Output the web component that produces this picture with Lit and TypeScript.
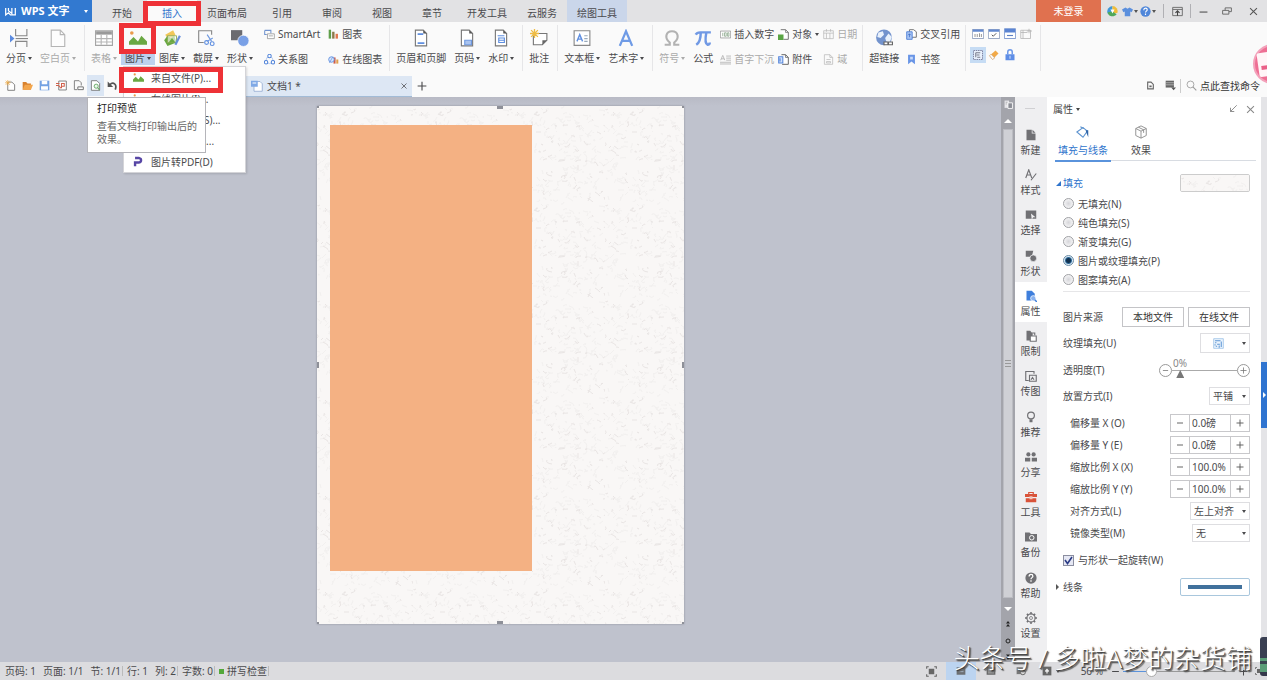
import { LitElement, html, svg, css, nothing } from "lit";
import { customElement, state } from "lit/decorators.js";
import { classMap } from "lit/directives/class-map.js";

const doc = svg`<path d="M3 1h7l3 3v11H3z" fill="#fff" stroke="#777"/><path d="M10 1v3h3z" fill="#555"/>`;
const ICONS: Record<string, unknown> = {
  logo: svg`<path d="M1 3v10l4-3 3 3h7V3M5 3v4l5 4V3" fill="none" stroke="#fff" stroke-width="1.8"/>`,
  pagebreak: svg`<path d="M5 0v6h10V0M5 16v-5h10v5" fill="none" stroke="#888"/><path d="M5 8.500h11" stroke="#888"/><path d="M0 5l4 3.500L0 12z" fill="#5b8be0"/>`,
  blank: svg`<path d="M2 1h8l4 4v10.500H2z" fill="#fdfdfd" stroke="#b5b5b5"/><path d="M10 1v4h4" fill="none" stroke="#b5b5b5"/>`,
  table: svg`<path d="M.5 1.500h15v13H.5z" fill="#fff" stroke="#a5a5a5"/><path d="M1 2h14v3H1z" fill="#999"/><path d="M1 8.500h14M1 11.500h14M5.500 5v9M10.500 5v9" stroke="#b5b5b5"/>`,
  picture: svg`<path d="M0 14v-3l4-4 4 4 3-5 5 5v3z" fill="#6aa843"/><circle cx="2.500" cy="3.500" r="1.600" fill="#eb9a4b"/>`,
  gallery: svg`<path d="M2 5l7-4 2 4-6 5z" fill="#f1c75a"/><path d="M1 10l3-4 3 2 3-2 2 6-8 3z" fill="#6aa843"/><path d="M4 6h8v6H4z" fill="#fff" fill-opacity=".6" stroke="#8eac55" stroke-width=".8"/><path d="M5 12l3-4 3 4z" fill="#6aa843"/><path d="M11 14l4-8" stroke="#6990db" stroke-width="2"/>`,
  capture: svg`<path d="M13 5V1.500H1.500V12H6" fill="none" stroke="#888"/><path d="M9 5l4 6M14 8l-5 3" stroke="#6e98df"/><circle cx="8.500" cy="12" r="1.700" fill="none" stroke="#5f8fe0"/><circle cx="13.500" cy="13" r="1.700" fill="none" stroke="#5f8fe0"/>`,
  shapes: svg`<path d="M0 1h10v9H0z" fill="#6b6b70"/><circle cx="11" cy="10.500" r="5" fill="#79a0e6" stroke="#fff" stroke-width=".6"/>`,
  smart: svg`<path d="M1 2h9v4M1 2v6h3" fill="none" stroke="#7294cf" stroke-width="1.500"/><path d="M5 7h10v7H5z" fill="#fff" stroke="#888"/><path d="M7 10h6" stroke="#888"/>`,
  relation: svg`<circle cx="8" cy="9" r="5" fill="none" stroke="#9bb7e6"/><circle cx="8" cy="3" r="2.500" fill="#fff" stroke="#4f82d8" stroke-width="1.500"/><circle cx="3" cy="12" r="2.500" fill="#fff" stroke="#4f82d8" stroke-width="1.500"/><circle cx="13" cy="12" r="2.500" fill="#fff" stroke="#4f82d8" stroke-width="1.500"/>`,
  chart: svg`<path d="M1 1h3.500v13H1z" fill="#5f9f4b"/><path d="M6 4h3.500v10H6z" fill="#8a7a4b"/><path d="M11 7h3.500v7H11z" fill="#e0764d"/>`,
  ochart: svg`<path d="M8 5h3v9H8z" fill="#ce5c46"/><path d="M12 8h3v6h-3z" fill="#e0a04d"/><circle cx="5" cy="8" r="4" fill="#d8e6fb" stroke="#5f8fe0" stroke-width="1.300"/><path d="M2 13l5-9" stroke="#5f8fe0"/>`,
  header: svg`${doc}<path d="M5 4.500h5M5 12.500h6" stroke="#5f8fe0" stroke-width="1.500"/>`,
  pageno: svg`${doc}<path d="M6 10h6v4H6z" fill="#a9c3ef" stroke="#6e98df"/>`,
  watermark: svg`${doc}<path d="M5 6h6M6 8h5v4H6zM6 10h5" fill="none" stroke="#5f8fe0"/>`,
  comment: svg`<path d="M3 4h12v6l-4 4H3z" fill="#fff" stroke="#777"/><path d="M11 14v-4h4z" fill="#666"/><path d="M4 0v8M0 4h8M1 1l6 6M7 1L1 7" stroke="#eebc45" stroke-width="1.200"/>`,
  textbox: svg`<path d="M1 1.500h14v13H1z" fill="#fff" stroke="#888"/><path d="M3.500 11L6 5l2.500 6M4.500 9h3" fill="none" stroke="#5f8fe0" stroke-width="1.200"/><path d="M10 6h3M10 8.500h3M10 11h3" stroke="#9ab"/>`,
  wordart: svg`<path d="M2.500 15L8 2l5.500 13M4.500 10.500h7" fill="none" stroke="#6f9be6" stroke-width="2"/>`,
  omega: svg`<path d="M1.500 14h4.500v-2C1 8 2.500 2 8 2s7 6 2 10v2h4.500" fill="none" stroke="#b2b2b2" stroke-width="1.900"/>`,
  pi: svg`<path d="M1.500 5c1-2 2-2 4-2H15M6 3c0 5-1 9-4 11M11 3c-1 5-1 10 1 11 1 0 2 0 2-2" fill="none" stroke="#7199e4" stroke-width="2.200"/>`,
  number: svg`<path d="M.5 3h15v10H.5z" fill="#fff" stroke="#888"/><path d="M4 5.500v5M6.500 5.500h2.500v5H6.500zM11 5.500h2v5h-2z" fill="none" stroke="#7a9a7a"/>`,
  dropcap: svg`<path d="M1 9l3-7 3 7M2 7h4M9 3h7M9 6h7M9 9h7M0 12h16M0 14.500h16" fill="none" stroke="#b5b5b5" stroke-width="1.300"/>`,
  object: svg`<path d="M4 1h7l4 4v10H8" fill="#fff" stroke="#666" stroke-width="1.300"/><path d="M11 1v4h4" fill="none" stroke="#666"/><path d="M0 8h8v8H0z" fill="#5aa545"/>`,
  attach: svg`<path d="M5 1h6l4 4v10H6" fill="#fff" stroke="#555" stroke-width="1.300"/><path d="M11 1v4h4" fill="none" stroke="#555"/><path d="M1 4h6v9H1zM3 6v5" fill="#cfe0fa" stroke="#5585da" stroke-width="1.500"/>`,
  date: svg`<path d="M1 2.500h14V14H1zM1 6h14M5 0v4M11 0v4M5 6v8M10 6v8" fill="none" stroke="#b5b5b5"/>`,
  field: svg`<path d="M2 1h8l4 4v10H2zM10 1v4h4M5 8h6M5 11h6v2H5z" fill="none" stroke="#b5b5b5"/>`,
  globe: svg`<circle cx="8" cy="7.500" r="7" fill="#7393cd"/><path d="M3 3l4-1 1 3-3 3-3-1zM9 8l3-4 3 3-2 5-3-1z" fill="#e9f1fb"/><path d="M8 11.500h3.500v2.500H8zM12 11.500h3.500v2.500H12z" fill="#fff" stroke="#666"/>`,
  xref: svg`<path d="M5 1h6l4 3v8H5z" fill="#fff" stroke="#666" stroke-width="1.300"/><path d="M1 4h8v11H1z" fill="#a8c4f3" stroke="#4f80d6" stroke-width="1.300"/><path d="M5 12V7M3 9l2-2 2 2" fill="none" stroke="#2d62c0"/>`,
  bookmark: svg`<path d="M3 1h10v14l-5-4-5 4z" fill="#6995e6"/><path d="M6 4h4v4H6z" fill="#c7d9f8"/>`,
  ftext: svg`<path d="M.5 2h15v12H.5z" fill="#fff" stroke="#7c8fb3"/><path d="M1 2h14v3H1z" fill="#6288cf"/><path d="M4 8v4M7 8v4M10 7v5M12.500 8v4" stroke="#777"/>`,
  fcheck: svg`<path d="M.5 2h15v12H.5z" fill="#fff" stroke="#7c8fb3"/><path d="M1 2h14v3H1z" fill="#6288cf"/><path d="M5 9l2 2 4-4" fill="none" stroke="#555" stroke-width="1.300"/>`,
  fdrop: svg`<path d="M.5 1h15v13H.5z" fill="#fff" stroke="#5f82c5"/><path d="M1 1h14v5H1z" fill="#5b84d2"/><path d="M4 10h8" stroke="#5f82c5" stroke-width="1.500"/>`,
  fgrey: svg`<path d="M1 3h13v11H1z" fill="none" stroke="#b0b0b0"/><path d="M1 6h9M4 3v11M12 1v6M9 4h7" stroke="#b0b0b0"/>`,
  fshade: svg`<path d="M2 2h12v12H2z" fill="#e8f0fc" stroke="#668" stroke-dasharray="2 1"/><path d="M5 11V5h6M6 8h4M7 11h4" fill="none" stroke="#556"/>`,
  eraser: svg`<path d="M2 9l8-7 4 4-8 8z" fill="#f1a948"/><path d="M2 9l2-2 5 5-3 2z" fill="#fff" stroke="#c9a47c"/>`,
  lock: svg`<path d="M5 7V4a3 3 0 016 0v3" fill="none" stroke="#6c98e8" stroke-width="2"/><path d="M2 7h12v8H2z" fill="#5d8de6"/><path d="M8 9v4" stroke="#fff"/>`,
  qnew: svg`<path d="M4 3h6l4 4v8H4z" fill="#fff" stroke="#777" stroke-width="1.300"/><path d="M4 0v8M0 4h8M1 1l6 6M7 1L1 7" stroke="#eeaa45"/>`,
  qopen: svg`<path d="M1 3h5l2 2h5v9H1z" fill="#d9822f"/><path d="M4 7h12l-3 7H1z" fill="#f3a64d"/>`,
  qsave: svg`<path d="M1 1h14v14H1z" fill="#74a2e3"/><path d="M4 1h8v5H4zM3 9h10v5H3z" fill="#fff"/>`,
  qpdf: svg`<path d="M4 1.500h11v13H4z" fill="#fff" stroke="#777" stroke-width="1.300"/><path d="M8 12V5h4v4H8M0 5h5M0 8h4l3 4" fill="none" stroke="#d0604b" stroke-width="1.500"/>`,
  qprint: svg`<path d="M2 1h7l3 3v4M2 1v13h4" fill="none" stroke="#777" stroke-width="1.300"/><path d="M7 10h8v4H7z" fill="#fff" stroke="#666" stroke-width="1.300"/>`,
  qprev: svg`<path d="M2 1h8l4 4v10H2z" fill="#fff" stroke="#777" stroke-width="1.300"/><circle cx="9" cy="9" r="3" fill="#eaf6ea" stroke="#60a560" stroke-width="1.300"/><path d="M11 11l3 4" stroke="#60a560" stroke-width="1.500"/>`,
  undo: svg`<path d="M4 7c5-5 11-1 8 7" fill="none" stroke="#555" stroke-width="2.500"/><path d="M1 2v8h8z" fill="#555"/>`,
  docw: svg`<path d="M4 2h8l3 3v10H4z" fill="#fff" stroke="#8aa3cb"/><path d="M0 1h9v8H0z" fill="#7fa9e6"/><path d="M2 4h5M6 11h7" stroke="#fff" stroke-width="1.500"/>`,
  close: svg`<path d="M3 3l10 10M13 3L3 13" stroke="currentColor" stroke-width="1.500"/>`,
  plus: svg`<path d="M8 1v14M1 8h14" stroke="currentColor" stroke-width="1.800"/>`,
  minus: svg`<path d="M2 8h12" stroke="currentColor" stroke-width="1.800"/>`,
  minimise: svg`<path d="M1 9h14" stroke="#555" stroke-width="2"/>`,
  restore: svg`<path d="M5 7V3h10v6h-4M1 7h10v6H1z" fill="none" stroke="#666" stroke-width="1.500"/>`,
  shield: svg`<path d="M8 0a8 8 0 00-7 11l6 4z" fill="#3f97d8"/><path d="M8 0a7.500 7.500 0 017 10l-7 1z" fill="#f0bd39"/><path d="M1 9c0 5 8 9 13 3l-6-4z" fill="#4fa95a"/><path d="M5 5h6L8 11z" fill="#fff"/>`,
  shirt: svg`<path d="M5 2l3 2 3-2 5 3-2 4-2-1v7H4V8L2 9 0 5z" fill="#5b8fdd"/>`,
  help: svg`<circle cx="8" cy="8" r="7.500" fill="#4f86d9"/><path d="M5.500 6c0-4 5-3.500 5-.5 0 2-2.500 2-2.500 4M8 11v2" fill="none" stroke="#fff" stroke-width="1.700"/>`,
  helpg: svg`<circle cx="8" cy="8" r="7.500" fill="#707074"/><path d="M5.500 6c0-4 5-3.500 5-.5 0 2-2.500 2-2.500 4M8 11v2" fill="none" stroke="#fff" stroke-width="1.700"/>`,
  upbox: svg`<path d="M1 2h14v12H1zM1 5h14" fill="none" stroke="#666" stroke-width="1.300"/><path d="M8 14V8M5 10l3-3 3 3" fill="none" stroke="#444" stroke-width="1.600"/>`,
  search: svg`<circle cx="6.500" cy="6.500" r="5" fill="none" stroke="#999" stroke-width="1.200"/><path d="M10 10l5 5" stroke="#999" stroke-width="1.500"/>`,
  dmini: svg`<path d="M3 2h6l4 4v8H3z" fill="none" stroke="#666" stroke-width="2"/><path d="M6 8h4v3H6z" fill="#666"/>`,
  lmini: svg`<path d="M1 1h12v10H1z" fill="#666"/><path d="M1 4h12M1 7h12" stroke="#ccc"/><path d="M9 11h7l-3.500 4z" fill="#555"/>`,
  pdf: svg`<path d="M3 15V9.500h6M3 3h6a3.300 3.300 0 010 6.500" fill="none" stroke="#5746a5" stroke-width="3.500"/>`,
  snew: svg`<path d="M2 1h7v5h5v9H2z" fill="#707074"/><path d="M10 1l4 4h-4z" fill="#707074"/>`,
  sstyle: svg`<path d="M1 12L5 1l4 11M2.500 8h5M8 15l7-9" fill="none" stroke="#707074" stroke-width="1.500"/>`,
  sselect: svg`<path d="M1 2h14v11H1z" fill="#707074"/><path d="M8 6l6 5-3 0-2 3z" fill="#efeff1"/>`,
  sshape: svg`<path d="M1 1h10l-2 8H1z" fill="#707074"/><circle cx="11" cy="11" r="4.500" fill="#707074" stroke="#efeff1"/>`,
  sprop: svg`<path d="M2 1h7l4 4v9H2z" fill="#3f7fdc"/><circle cx="11" cy="11" r="3.500" fill="#8ab2ee" stroke="#fff"/><path d="M13 13l3 3" stroke="#3f7fdc" stroke-width="2"/>`,
  slimit: svg`<path d="M2 1h5l3 4v9H2z" fill="#707074"/><path d="M7 8h8v7H7z" fill="#fff" stroke="#707074" stroke-width="1.500"/><path d="M9 7V4h4v3" fill="none" stroke="#707074" stroke-width="1.500"/>`,
  simg: svg`<path d="M12 5V2H1v12h4" fill="none" stroke="#707074" stroke-width="1.500"/><path d="M6 7h9v8H6zM8 13l2-3 2 3" fill="none" stroke="#707074" stroke-width="1.500"/>`,
  srec: svg`<circle cx="8" cy="6" r="4.500" fill="none" stroke="#707074" stroke-width="1.600"/><path d="M6 11h4v4H6z" fill="#707074"/>`,
  sshare: svg`<circle cx="4.500" cy="4.500" r="2.800" fill="#707074"/><circle cx="11.500" cy="4.500" r="2.800" fill="#707074"/><path d="M0 14V9h7v5zM9 14V9h7v5z" fill="#707074"/>`,
  stool: svg`<path d="M5 4V2h6v2" fill="none" stroke="#d9533a" stroke-width="1.600"/><path d="M0 4h16v4H0zM1 9.500h14V15H1z" fill="#d9533a"/><path d="M6 7h4v4H6z" fill="#f4c8bf"/>`,
  sbackup: svg`<path d="M0 2h6l2 2h8v10H0z" fill="#707074"/><circle cx="9" cy="9" r="3" fill="none" stroke="#fff" stroke-width="1.300"/>`,
  sgear: svg`<circle cx="8" cy="8" r="5.500" fill="none" stroke="#707074" stroke-width="1.500"/><circle cx="8" cy="8" r="2" fill="none" stroke="#707074"/><path d="M8 0v3M8 13v3M0 8h3M13 8h3M2.500 2.500l2 2M11.500 11.500l2 2M13.500 2.500l-2 2M2.500 13.500l2-2" stroke="#707074" stroke-width="2"/>`,
  bucket: svg`<path d="M1 8l7-5 5 4-5 7z" fill="#fff" stroke="#5b92cf" stroke-width="1.200"/><path d="M5 2l4 2" stroke="#5b92cf" stroke-width="1.200"/><path d="M11 6h3v8l-2-5z" fill="#2f65a8"/>`,
  cube: svg`<path d="M8 1l6 3v8l-6 3-6-3V4zM2 4l6 3 6-3M8 7v8M5 2.500l6 3V9" fill="none" stroke="#888"/>`,
  dock: svg`<path d="M14 2L4 12M4 6v6h6" fill="none" stroke="#777" stroke-width="1.300"/>`,
  texture: svg`<path d="M1 1h14v14H1z" fill="#edf5fd" stroke="#8ab8e4"/><path d="M3 4h8M3 7h2M6 9h4M4 12h2M12 5v8M9 11v3M3 9v2" stroke="#5c95d4" stroke-width="1.500"/>`,
  full: svg`<path d="M4 4h8v8H4z" fill="#666"/><path d="M1 4V1h3M12 1h3v3M15 12v3h-3M4 15H1v-3" fill="none" stroke="#666" stroke-width="1.600"/>`,
  vpage: svg`<path d="M1 2h14v12H1z" fill="#6d7074"/><path d="M4 6h8M4 9h8" stroke="#c8ddf5"/>`,
  vout: svg`<path d="M1 2h14v12H1z" fill="#666"/><path d="M3 5h10M3 8h10M3 11h10" stroke="#ddd"/>`,
  vweb: svg`<path d="M1 2h10v11H1z" fill="#777"/><circle cx="11" cy="10" r="4" fill="#ddd" stroke="#666" stroke-width="1.500"/>`,
  vsplit: svg`<path d="M1 1h8v13H1z" fill="#e6e6ea"/><path d="M7 5h8v10H7z" fill="#8b8d95" stroke="#fff" stroke-width="1.500"/><path d="M3 4h3M3 7h2" stroke="#888"/>`,
  vguard: svg`<path d="M1 1h14v14H1z" fill="#666"/><path d="M8 4l3 3v2H9v3H7V9H5V7z" fill="#eee"/>`,
};

const icon = (name: string, size = 12) =>
  html`<svg class="ico" width=${size} height=${size} viewBox="0 0 16 16" aria-hidden="true">${ICONS[name]}</svg>`;
const caret = html`<svg class="caret" width="4" height="3" viewBox="0 0 4 3" aria-hidden="true"><path d="M0 0h4L2 3z" fill="currentColor"/></svg>`;

const TILE = 96;
/** Fibres of the paper texture, laid out by a small fixed-seed generator. */
const fibres = (() => {
  let seed = 20177;
  const rnd = (n: number) => {
    seed = (seed * 48271) % 2147483647;
    return Math.floor((seed / 2147483647) * n);
  };
  let dark = "", light = "";
  for (let i = 0; i < 260; i++) {
    const d = `M${rnd(TILE)} ${rnd(TILE)}q${rnd(7) - 3} ${rnd(7) - 3} ${rnd(11) - 5} ${rnd(9) - 4}`;
    if (i % 4 === 0) dark += d; else light += d;
  }
  return { dark, light };
})();
const paper = (id: string) => html`<svg class="paper" width="100%" height="100%" aria-hidden="true">
  <defs><pattern id=${id} width=${TILE} height=${TILE} patternUnits="userSpaceOnUse">
    <rect width=${TILE} height=${TILE} fill="#f9f7f6"/>
    <path d=${fibres.light} fill="none" stroke="#f2f0ef"/><path d=${fibres.dark} fill="none" stroke="#e9e5e4"/>
  </pattern></defs><rect width="100%" height="100%" fill="url(#${id})"/></svg>`;

interface Cmd { i: string; t: string; drop?: boolean; off?: boolean; }

const QUICK = [["qnew", "新建"], ["qopen", "打开"], ["qsave", "保存"], ["qpdf", "输出为PDF"], ["qprint", "打印"], ["qprev", "打印预览"], ["undo", "撤销"]];
const FORMS = [["ftext", "文字型窗体域"], ["fcheck", "复选框型窗体域"], ["fdrop", "下拉型窗体域"], ["fgrey", "窗体域选项"], ["fshade", "窗体域底纹"], ["eraser", "重新设置窗体域"], ["lock", "保护窗体"]];

@customElement("app-root")
export class AppRoot extends LitElement {
  @state() private fill = 3;

  static styles = css`
    :host { display: flex; flex-direction: column; height: 100vh; position: relative; overflow: hidden; font: 10px/14px "Noto Sans", "Noto Sans CJK SC", sans-serif; color: #4a4a4d; background: #fafafa; }
    * { box-sizing: border-box; }
    button, input, select { font: inherit; color: inherit; border: 0; background: none; padding: 0; margin: 0; border-radius: 0; white-space: nowrap; }
    .ico, .caret { display: block; flex: none; }
    .grow { flex: 1; }
    .red { position: absolute; border: 5px solid #ee3237; pointer-events: none; z-index: 5; }

    .title { display: flex; height: 22px; background: #e2e2e4; align-items: stretch; }
    .app { display: flex; align-items: center; gap: 5px; width: 92px; margin-right: 5px; padding: 0 4px 0 5px; background: #3279d0; color: #fff; font-size: 11px; font-weight: 700; }
    .app .caret { margin-left: auto; }
    .tab { position: relative; padding: 3px 10px 0; }
    .tab.two { padding: 3px 15px 0; }
    .tab.on { background: #fafafa; color: #2f74cc; }
    .tab.tool { background: #cad6ea; }
    .tab .red { inset: 1px -4px -4px -4px; }
    .login { width: 65px; background: #e0714f; color: #fff; margin-right: 2px; }
    .win { display: flex; align-items: center; color: #555; }
    .win button { display: flex; align-items: center; gap: 1px; height: 14px; justify-content: center; }
    .win .s { width: 18px; }
    .win .m { width: 24px; }
    .win .l { width: 28px; }
    .win .box { width: 28px; margin-left: 6px; border-left: 1px solid #b0b0b4; border-right: 1px solid #b0b0b4; }

    .ribbon { display: flex; height: 52px; padding-left: 2px; align-items: flex-start; }
    .group { display: flex; height: 46px; margin-top: 3px; padding-right: 4px; margin-right: 2px; border-right: 1px solid #e6e6e8; }
    .big { position: relative; display: flex; flex-direction: column; align-items: center; gap: 4px; padding: 4px 4px 0; height: 42px; }
    .big > span { display: flex; align-items: center; gap: 2px; }
    .big.on > span { background: #bdd2ee; margin: 0 -4px; padding: 0 4px; }
    .big .red { inset: -2px -1px 13px -2px; }
    .off { color: #aaa; }
    .cols { display: grid; grid-auto-flow: column; grid-template-rows: 18px 18px; row-gap: 7px; column-gap: 4px; padding: 0 1px 0 3px; }
    .cols.wide { column-gap: 8px; padding: 0 3px 0 7px; }
    .cmd { display: flex; align-items: center; gap: 3px; }
    .forms { display: grid; grid-template-columns: repeat(4, 16px); grid-template-rows: 18px 20px; row-gap: 2px; padding: 0 2px 0 2px; }
    .forms button { display: grid; place-items: center; }
    .forms .on { background: #c6dcf4; height: 16px; align-self: center; }

    .bar { display: flex; height: 23px; align-items: center; }
    .quick { display: flex; align-items: center; width: 246px; padding-left: 2px; height: 23px; }
    .quick button { display: grid; place-items: center; width: 17px; height: 21px; }
    .quick .on { background: #dbe6f4; }
    .doctab { display: flex; align-items: center; gap: 4px; width: 166px; height: 21px; margin-top: 2px; padding: 0 4px 0 5px; background: #dde7f4; border-bottom: 1px solid #a2bbd6; }
    .find { display: flex; align-items: center; gap: 3px; padding: 0 7px 0 5px; border-left: 1px solid #ccc; color: #333; }
    .bar > .tool { display: grid; place-items: center; width: 20px; }

    .main { display: flex; flex: 1; min-height: 0; }
    .canvas { display: flex; flex: 1; min-width: 0; justify-content: center; align-items: flex-start; padding-top: 9px; background: linear-gradient(#b8bac5, #bfc2cd 9px); }
    .page { position: relative; width: 367px; height: 518px; box-shadow: 0 0 2px #8b8e99; }
    .paper { display: block; }
    .shape { position: absolute; left: 13px; top: 19px; width: 202px; height: 446px; background: #f4b183; }
    .h { position: absolute; background: #8e9098; width: 6px; height: 3px; }
    .h.n { top: 0; left: calc(50% - 4px); }
    .h.s { bottom: 0; left: calc(50% - 4px); }
    .h.w, .h.e { width: 2px; height: 6px; top: calc(50% - 3px); }
    .h.w { left: 0; }
    .h.e { right: 0; }
    .h.c { width: 2px; height: 2px; }
    .h.nw { left: 0; top: 0; }
    .h.ne { right: 0; top: 0; }
    .h.sw { left: 0; bottom: 0; }
    .h.se { right: 0; bottom: 0; }
    .scroll { display: flex; flex-direction: column; width: 14px; background: #a3a4ab; align-items: center; color: #fff; }
    .scroll .thumb { flex: 1; width: 10px; background: #cfd0d5; display: grid; place-items: center; border: 1px solid #bbbcc2; }
    .scroll .up { display: grid; justify-items: center; align-content: space-between; height: 32px; padding: 3px 0 6px; }
    .scroll .dn { display: grid; justify-items: center; height: 64px; align-content: space-between; padding: 9px 0 2px; }

    .side { display: flex; flex-direction: column; width: 32px; padding: 24px 1px 18px 0; background: linear-gradient(#d0d0d3, #d0d0d3) 10px 11px / 10px 1px no-repeat #efeff1; }
    .side button { flex: 1; display: flex; flex-direction: column; align-items: center; gap: 2px; padding-top: 8px; }
    .side .on { background: #fff; margin-right: -1px; padding-right: 1px; }
    .panel { width: 214px; padding: 5px 11px 0 8px; background: #fff; }
    .phead { display: flex; align-items: center; gap: 7px; height: 14px; margin-right: -6px; }
    .phead button { display: flex; align-items: center; gap: 3px; color: #888; }
    .phead .name { color: #444; margin-left: -2px; }
    .ptabs { display: flex; gap: 2px; height: 45px; margin-right: -6px; margin-bottom: 11px; border-bottom: 1px solid #d8dce2; }
    .ptabs button { display: flex; flex-direction: column; align-items: center; gap: 4px; width: 56px; height: 46px; padding-top: 9px; }
    .ptabs .on { color: #2f74cc; border-bottom: 2px solid #5a93dc; }
    .row { display: flex; align-items: center; gap: 4px; height: 22px; }
    .row > label, .row > .lab { flex: 1; }
    .pad { padding-left: 8px; }
    .pad2 { padding-left: 15px; }
    .t4 { margin-top: 4px; }
    .t5 { margin-top: 5px; }
    .sec { display: flex; align-items: center; gap: 2px; flex: 1; }
    .blue { color: #2f74cc; }
    .swatch { width: 70px; height: 18px; border: 1px solid #ccc; border-radius: 2px; overflow: hidden; }
    .swatch.ln { display: grid; place-items: center; border-color: #a9c7dd; }
    .swatch.ln i { width: 54px; height: 4px; background: #41719c; }
    .opt { display: flex; align-items: center; gap: 4px; height: 19px; padding-left: 8px; }
    hr { border: 0; border-top: 1px solid #e6e6e8; margin: 2px 0 14px 8px; }
    input[type="radio"] { appearance: none; width: 11px; height: 11px; border: 1px solid #a0a1a5; border-radius: 50%; background: radial-gradient(#d6d6da, #fff); }
    input[type="radio"]:checked { border-color: #6a8ba5; background: radial-gradient(#12324f 0 2px, #2d6a9a 3px, #dbeaf5 4px); }
    input[type="checkbox"] { appearance: none; width: 11px; height: 11px; grid-area: 1 / 1; border: 1px solid #8b8ea0; background: #e6e8f4; }
    .tick { display: grid; place-items: center; }
    .tick svg { grid-area: 1 / 1; pointer-events: none; }
    .push { width: 62px; height: 20px; border: 1px solid #c4c4c7; color: #333; }
    .sel { display: grid; border: 1px solid #dedee1; height: 18px; align-items: center; }
    .sel select { appearance: none; grid-area: 1 / 1; width: 100%; padding-left: 3px; outline: 0; height: 16px; }
    .sel > svg { grid-area: 1 / 1; justify-self: end; margin-right: 3px; pointer-events: none; }
    .sel > .tex { justify-self: center; margin-right: 14px; }
    .w50 { width: 50px; height: 20px; }
    .w41 { width: 41px; }
    .w60 { width: 60px; }
    .w58 { width: 58px; }
    .spin { display: grid; grid-template-columns: 18px 42px 18px; height: 18px; border: 1px solid #c8c8cb; }
    .spin button { display: grid; place-items: center; color: #555; }
    .spin input { width: 42px; padding-left: 2px; border: solid #c8c8cb; border-width: 0 1px; }
    .trans { position: relative; display: flex; align-items: center; width: 91px; }
    .trans output { position: absolute; left: 14px; top: -7px; color: #888; }
    .round { display: grid; place-items: center; width: 13px; height: 13px; border: 1px solid #999; border-radius: 50%; color: #777; }
    .trans input { appearance: none; flex: 1; min-width: 0; height: 14px; background: linear-gradient(#aaa, #aaa) center / 100% 1px no-repeat; }
    .trans input::-webkit-slider-thumb { appearance: none; width: 8px; height: 8px; margin-top: 8px; background: #777; clip-path: polygon(50% 0, 100% 100%, 0 100%); }
    .edge { display: flex; align-items: center; width: 6px; background: #e4e4e7; }
    .edge button { display: grid; place-items: center; width: 6px; height: 66px; margin-top: 31px; background: #2f74d0; color: #fff; }

    .status { display: flex; align-items: center; height: 18px; background: #dcdcdf; padding-left: 5px; white-space: nowrap; }
    .status .it { padding-right: 7px; }
    .status .bd { padding-right: 1px; margin-right: 4px; border-right: 1px solid #bbb; line-height: 10px; }
    .status .ok { width: 5px; height: 5px; background: #53a83a; margin-right: 3px; }
    .status button { display: flex; align-items: center; justify-content: center; gap: 4px; width: 30px; height: 18px; }
    .status .on { background: #bcd4f0; }
    .status .pm { width: 16px; }
    .status .zl { width: 41px; padding-right: 4px; text-align: right; }
    .status .zoom { appearance: none; width: 112px; height: 14px; background: linear-gradient(90deg, #5b93dc 25%, #999 25%) center / 100% 1px no-repeat; }
    .zoom::-webkit-slider-thumb { appearance: none; width: 11px; height: 11px; border-radius: 50%; background: #fff; border: 1px solid #aaa; }

    .menu { position: absolute; left: 123px; top: 66px; width: 123px; background: #fff; border: 1px solid #d4d4d8; box-shadow: 1px 1px 2px #0002; z-index: 3; }
    .menu button { display: flex; align-items: center; gap: 7px; width: 100%; height: 21px; padding-left: 9px; }
    .menu .red { left: -5px; top: 0; width: 104px; height: 26px; }
    .tip { position: absolute; left: 87px; top: 97px; width: 119px; padding: 3px 6px 6px 9px; background: #fff; border: 1px solid #b5b5ba; z-index: 4; color: #666; line-height: 13px; }
    .tip b { display: block; font-weight: 400; color: #222; line-height: 14px; margin-bottom: 5px; }
    .badge { position: absolute; right: -26px; top: 44px; width: 40px; height: 40px; border: 2px solid #f3a1ba; border-radius: 50%; background: #ee6f94; }
    .badge i { position: absolute; left: 3px; top: 6px; width: 20px; height: 24px; background: #fff5f7; border-radius: 2px; transform: rotate(-8deg); }
    .badge i::after { content: ""; position: absolute; left: 3px; top: 13px; width: 12px; height: 4px; background: #ea6088; }
    .gadget { position: absolute; right: 0; bottom: 4px; width: 7px; height: 39px; border-radius: 3px 0 0 3px; background: linear-gradient(#3a3f52 55%, #5a9d77 55% 62%, #3a4450 62% 68%, #5a9d77 68% 90%, #34384a 90%); z-index: 7; }
    .mark { position: absolute; right: 15px; bottom: 4px; font-size: 26px; line-height: 36px; font-weight: 300; color: #fff; text-shadow: 1px 1px 1px #333, 2px 2px 1px #666; z-index: 6; pointer-events: none; white-space: pre; }
  `;

  private big(i: string, t: string, drop = false, off = false, on = false) {
    return html`<button class=${classMap({ big: true, off, on })}>${icon(i, 18)}<span>${t}${drop ? caret : nothing}</span>${on ? html`<i class="red"></i>` : nothing}</button>`;
  }
  private cmds(list: Cmd[], wide = false) {
    return html`<div class=${classMap({ cols: true, wide })}>${list.map((c) => html`<button class=${classMap({ cmd: true, off: !!c.off })}>${icon(c.i, 11)}<span>${c.t}</span>${c.drop ? caret : nothing}</button>`)}</div>`;
  }
  private spin(id: string, label: string, value: string, gap = "") {
    return html`<div class="row pad2 ${gap}"><label for=${id}>${label}</label><div class="spin">
      <button aria-label="减少">${icon("minus", 8)}</button><input id=${id} .value=${value} /><button aria-label="增加">${icon("plus", 8)}</button></div></div>`;
  }
  private pick(id: string, label: string, value: string, width: string, pad: string) {
    return html`<div class="row ${pad}"><label for=${id}>${label}</label><div class="sel ${width}"><select id=${id}><option>${value}</option></select>${caret}</div></div>`;
  }

  private renderTitle() {
    return html`<header class="title">
      <div class="app">${icon("logo", 11)}<span>WPS 文字</span>${caret}</div>
      ${["开始", "插入", "页面布局", "引用", "审阅", "视图", "章节", "开发工具", "云服务", "绘图工具"].map((t) => html`
        <button class=${classMap({ tab: true, two: t.length === 2, on: t === "插入", tool: t === "绘图工具" })}>${t}${t === "插入" ? html`<i class="red"></i>` : nothing}</button>`)}
      <span class="grow"></span>
      <button class="login">未登录</button>
      <div class="win">
        <button class="s" aria-label="安全">${icon("shield", 11)}</button>
        <button class="s" aria-label="皮肤">${icon("shirt", 11)}${caret}</button>
        <button class="s" aria-label="帮助">${icon("help", 11)}${caret}</button>
        <button class="box" aria-label="隐藏功能区">${icon("upbox", 11)}</button>
        <button class="m" aria-label="最小化">${icon("minimise", 9)}</button>
        <button class="m" aria-label="还原">${icon("restore", 10)}</button>
        <button class="l" aria-label="关闭">${icon("close", 11)}</button>
      </div>
    </header>`;
  }

  private renderRibbon() {
    return html`<nav class="ribbon">
      <div class="group">${this.big("pagebreak", "分页", true)}${this.big("blank", "空白页", true, true)}</div>
      <div class="group">${this.big("table", "表格", true, true)}${this.big("picture", "图片", true, false, true)}${this.big("gallery", "图库", true)}${this.big("capture", "截屏", true)}${this.big("shapes", "形状", true)}
        ${this.cmds([{ i: "smart", t: "SmartArt" }, { i: "relation", t: "关系图" }, { i: "chart", t: "图表" }, { i: "ochart", t: "在线图表" }], true)}</div>
      <div class="group">${this.big("header", "页眉和页脚")}${this.big("pageno", "页码", true)}${this.big("watermark", "水印", true)}</div>
      <div class="group">${this.big("comment", "批注")}</div>
      <div class="group">${this.big("textbox", "文本框", true)}${this.big("wordart", "艺术字", true)}</div>
      <div class="group">${this.big("omega", "符号", true, true)}${this.big("pi", "公式")}
        ${this.cmds([{ i: "number", t: "插入数字" }, { i: "dropcap", t: "首字下沉", off: true }, { i: "object", t: "对象", drop: true }, { i: "attach", t: "附件" }, { i: "date", t: "日期", off: true }, { i: "field", t: "域", off: true }])}</div>
      <div class="group">${this.big("globe", "超链接")}${this.cmds([{ i: "xref", t: "交叉引用" }, { i: "bookmark", t: "书签" }])}</div>
      <div class="group"><div class="forms">${FORMS.map(([n, t]) => html`<button aria-label=${t} class=${n === "fshade" ? "on" : ""}>${icon(n, 12)}</button>`)}</div></div>
    </nav>`;
  }

  private renderBar() {
    return html`<div class="bar">
      <div class="quick">${QUICK.map(([n, t]) => html`<button aria-label=${t} class=${n === "qprev" ? "on" : ""}>${icon(n, 11)}</button>`)}</div>
      <div class="doctab">${icon("docw", 12)}<span class="grow">文档1 *</span><button aria-label="关闭文档">${icon("close", 8)}</button></div>
      <button class="tool" aria-label="新建标签">${icon("plus", 10)}</button>
      <span class="grow"></span>
      <button class="tool" aria-label="文档">${icon("dmini", 9)}</button>
      <button class="tool" aria-label="列表">${icon("lmini", 11)}</button>
      <button class="find">${icon("search", 11)}<span>点此查找命令</span></button>
    </div>`;
  }

  private renderSide() {
    const items = [["snew", "新建"], ["sstyle", "样式"], ["sselect", "选择"], ["sshape", "形状"], ["sprop", "属性"], ["slimit", "限制"], ["simg", "传图"], ["srec", "推荐"], ["sshare", "分享"], ["stool", "工具"], ["sbackup", "备份"], ["helpg", "帮助"], ["sgear", "设置"]];
    return html`<aside class="side">${items.map(([i, t]) => html`<button class=${t === "属性" ? "on" : ""}>${icon(i, 12)}<span>${t}</span></button>`)}</aside>`;
  }

  private renderPanel() {
    const fills = ["无填充(N)", "纯色填充(S)", "渐变填充(G)", "图片或纹理填充(P)", "图案填充(A)"];
    return html`<section class="panel">
      <div class="phead"><button class="name">属性 ${caret}</button><span class="grow"></span><button aria-label="停靠">${icon("dock", 10)}</button><button aria-label="关闭">${icon("close", 11)}</button></div>
      <div class="ptabs"><button class="on">${icon("bucket", 14)}<span>填充与线条</span></button><button>${icon("cube", 14)}<span>效果</span></button></div>
      <div class="row"><span class="sec blue"><svg width="6" height="6" aria-hidden="true"><path d="M6 1v5H1z" fill="#2f74cc"/></svg>填充</span><div class="swatch">${paper("pat-swatch")}</div></div>
      ${fills.map((t, n) => html`<div class="opt"><input type="radio" name="fill" id="fill${n}" .checked=${this.fill === n} @change=${() => (this.fill = n)} /><label for="fill${n}">${t}</label></div>`)}
      <hr />
      <div class="row pad"><span class="lab">图片来源</span><button class="push">本地文件</button><button class="push">在线文件</button></div>
      <div class="row pad t4"><label for="tex">纹理填充(U)</label><div class="sel w50"><select id="tex"></select><svg class="tex" width="11" height="11" viewBox="0 0 16 16" aria-hidden="true">${ICONS.texture}</svg>${caret}</div></div>
      <div class="row pad t5"><label for="tr">透明度(T)</label><div class="trans"><button class="round" aria-label="减少">${icon("minus", 7)}</button><output for="tr">0%</output><input id="tr" type="range" min="-8" max="100" .value=${"0"} /><button class="round" aria-label="增加">${icon("plus", 7)}</button></div></div>
      ${this.pick("place", "放置方式(I)", "平铺", "w41", "pad t4")}
      ${this.spin("ox", "偏移量 X (O)", "0.0磅", "t5")}
      ${this.spin("oy", "偏移量 Y (E)", "0.0磅")}
      ${this.spin("sx", "缩放比例 X (X)", "100.0%")}
      ${this.spin("sy", "缩放比例 Y (Y)", "100.0%")}
      ${this.pick("al", "对齐方式(L)", "左上对齐", "w60", "pad2")}
      ${this.pick("mi", "镜像类型(M)", "无", "w58", "pad2")}
      <div class="row pad t5"><span class="tick"><input type="checkbox" id="rot" checked /><svg width="9" height="9" viewBox="0 0 9 9" aria-hidden="true"><path d="M1 4l2.500 3.500L8 1" fill="none" stroke="#2b3c86" stroke-width="1.600"/></svg></span><label for="rot">与形状一起旋转(W)</label></div>
      <div class="row t5"><span class="sec"><svg width="6" height="6" aria-hidden="true"><path d="M1 0l3 3-3 3z" fill="#555"/></svg>线条</span><div class="swatch ln"><i></i></div></div>
    </section>`;
  }

  render() {
    return html`
      ${this.renderTitle()}${this.renderRibbon()}${this.renderBar()}
      <main class="main">
        <div class="canvas"><div class="page">${paper("pat-page")}<div class="shape"></div>
          ${["n", "s", "w", "e", "c nw", "c ne", "c sw", "c se"].map((h) => html`<i class="h ${h}"></i>`)}</div></div>
        <div class="scroll">
          <div class="up">${icon("vsplit", 9)}<svg width="8" height="4" aria-hidden="true"><path d="M0 4l4-4 4 4z" fill="#fff"/></svg></div>
          <div class="thumb"><svg width="6" height="7" aria-hidden="true"><path d="M0 .5h6M0 3.500h6M0 6.500h6" stroke="#999"/></svg></div>
          <div class="dn"><svg width="8" height="4" aria-hidden="true"><path d="M0 0h8L4 4z" fill="#fff"/></svg>
            <svg width="6" height="6" aria-hidden="true"><path d="M3 0l2 2.500H1zM3 3l2 2.500H1z" fill="#222"/></svg>
            <svg width="6" height="6" aria-hidden="true"><circle cx="3" cy="3" r="2" fill="none" stroke="#222"/></svg>
            <svg width="6" height="6" aria-hidden="true"><path d="M3 3L5 .5H1zM3 6l2-2.500H1z" fill="#222"/></svg></div>
        </div>
        ${this.renderSide()}${this.renderPanel()}
        <div class="edge"><button aria-label="展开"><svg width="4" height="6" aria-hidden="true"><path d="M1 0l3 3-3 3z" fill="#fff"/></svg></button></div>
      </main>
      <footer class="status">
        <span class="it">页码: 1</span><span class="it">页面: 1/1</span><span class="bd">节: 1/1</span><span class="it">行: 1</span><span class="bd">列: 2</span><span class="bd">字数: 0</span><i class="ok"></i><span class="bd">拼写检查</span>
        <span class="grow"></span>
        <button aria-label="全屏">${icon("full", 11)}</button><button class="on" aria-label="页面视图">${icon("vpage", 10)}</button><button aria-label="大纲视图">${icon("vout", 10)}</button><button aria-label="网页视图">${icon("vweb", 10)}</button><button aria-label="护眼模式">${icon("vguard", 10)}${caret}</button>
        <label for="zoom" class="zl">56 %</label>
        <button class="pm" aria-label="缩小">${icon("minus", 9)}</button><input id="zoom" class="zoom" type="range" .value=${"23"} /><button class="pm" aria-label="放大">${icon("plus", 9)}</button><button class="pm" aria-label="适应">${icon("full", 8)}</button>
      </footer>
      <div class="menu" role="menu">
        <button>${icon("picture", 11)}来自文件(P)...</button><button>${icon("picture", 11)}在线图片(I)...</button><button>${icon("capture", 11)}来自扫描仪(S)...</button><button>${icon("capture", 11)}来自手机(M)...</button><button>${icon("pdf", 11)}图片转PDF(D)</button>
        <i class="red"></i>
      </div>
      <div class="tip" role="tooltip"><b>打印预览</b>查看文档打印输出后的效果。</div>
      <div class="badge"><i></i></div><div class="gadget"></div>
      <div class="mark">头条号 / 多啦A梦的杂货铺</div>`;
  }
}
